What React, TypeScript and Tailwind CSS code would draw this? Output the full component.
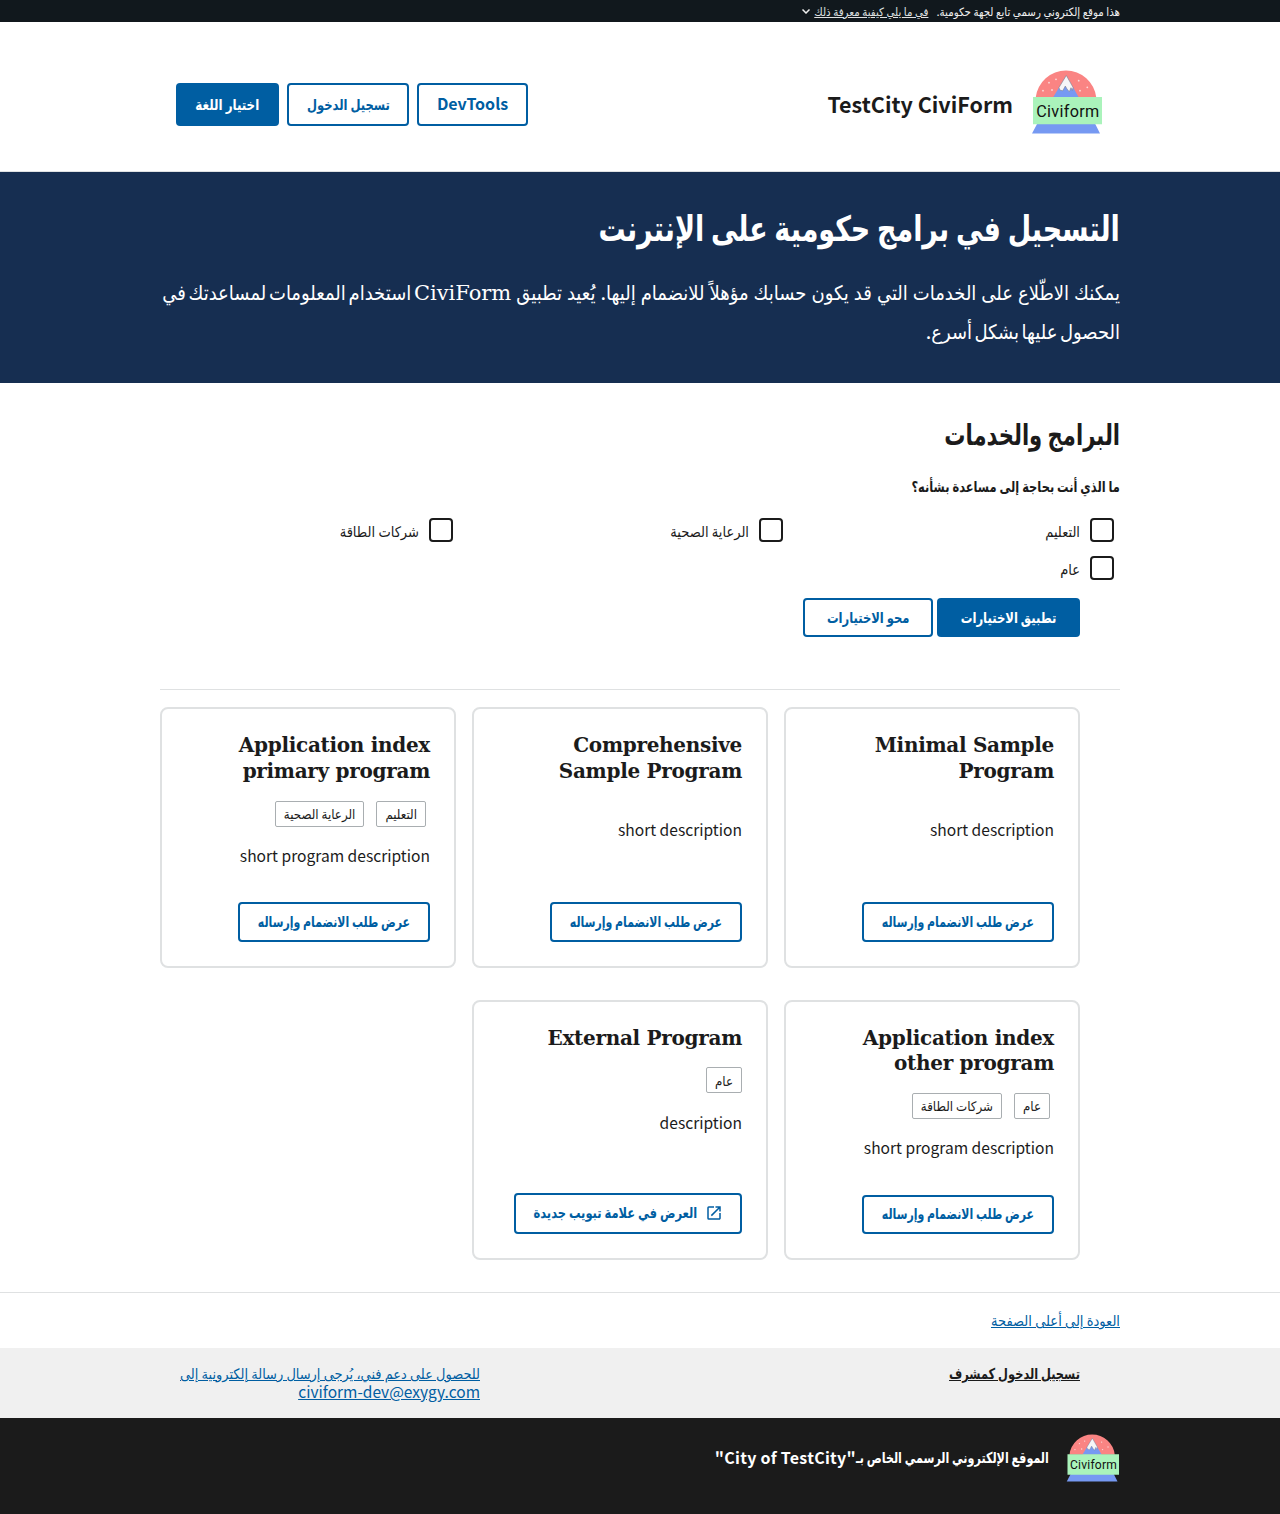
import React from "react";

const sans = "font-['Noto_Sans_CJK_JP','DejaVu_Sans_Condensed','DejaVu_Sans',sans-serif]";

function Logo({ className }: { className: string }) {
  return (
    <svg viewBox="0 0 71 64" className={`shrink-0 ${className}`} aria-label="Civiform">
      <path d="M4.700 27.500A30.500 30.500 0 0 1 65.300 27.500z" fill="#fa8483" />
      <path d="M22 27.500 35.300 5.500 47.800 27.500z" fill="#7699f2" />
      <path d="M35.300 5.500 28 17.500 28.800 20 31.700 20.800 34.300 16 36 19 38.300 21.700 40 17.700 41.300 20.500 42 17.300z" fill="#f6f6f8" stroke="#77777c" strokeWidth=".5" />
      <g fill="#fbdada">
        {[[18, 12.7], [25, 9.3], [12, 20.7], [21, 20], [47.7, 10.7], [56.3, 17.3], [49, 20.7]].map(([x, y]) => (
          <circle key={x} cx={x} cy={y} r=".9" />
        ))}
      </g>
      <path d="M1 63.500 6.300 53.500H64L69 63.500z" fill="#7699f2" />
      <path d="M2 27H71V54.300H2z" fill="#aaf3bb" />
      <text x="5.200" y="47.300" textLength="63" direction="ltr" textAnchor="start" fontFamily="Roboto" fontSize="16.200" fill="#111">Civiform</text>
    </svg>
  );
}

/* Bold Arabic runs are set slightly narrower than the family's natural width. */
function Narrow({ children, className }: { children: React.ReactNode; className: string }) {
  return <span className={`inline-block whitespace-nowrap ${className}`}>{children}</span>;
}

function Button({ children, className, solid }: { children: React.ReactNode; className: string; solid?: boolean }) {
  return (
    <button className={`flex items-center justify-center rounded-[4px] pb-[3px] text-[15px] leading-none font-bold whitespace-nowrap ${solid ? "bg-[#005ea2] text-white" : "border-2 border-[#005ea2] bg-white text-[#005ea2]"} ${className}`}>
      {children}
    </button>
  );
}

function Check({ label, className }: { label: string; className: string }) {
  return (
    <label className={`flex h-6 items-start gap-[10px] text-[14.5px] ${className}`}>
      <span className="h-6 w-6 shrink-0 rounded-[4px] border-2 border-[#1b1b1b]" />
      <span className="leading-[26px]">{label}</span>
    </label>
  );
}

function Card({ title, tags, desc, external, className }: { title: string[]; tags?: string[]; desc: string; external?: boolean; className: string }) {
  return (
    <article className={`flex w-[296px] flex-col items-start rounded-lg border-2 border-[#dfe1e2] p-6 ${className}`}>
      <h3 className="font-['DejaVu_Serif'] text-[20px] leading-[25.6px] font-bold tracking-[-0.3px] whitespace-nowrap">
        {title.map((t) => <span key={t} className="block">{t}</span>)}
      </h3>
      {tags ? (
        <div className={`mt-[16.2px] flex h-[26px] gap-3 ${tags.length > 1 ? "ps-1" : ""}`}>
          {tags.map((t) => (
            <span key={t} className="flex items-center rounded-[2px] border border-[#a9aeb1] px-2 text-[13.2px] leading-none whitespace-nowrap">{t}</span>
          ))}
        </div>
      ) : null}
      <p className={`text-[15.6px] leading-[26px] ${tags ? "mt-[15.2px]" : "mt-8"}`}>{desc}</p>
      {external ? (
        <Button className="mt-auto h-[41px] w-[228px]">
          <svg viewBox="0 0 24 24" className="mt-[3px] h-[18px] w-[18px] shrink-0" fill="currentColor">
            <path d="M19 19H5V5h7V3H5a2 2 0 0 0-2 2v14a2 2 0 0 0 2 2h14c1.100 0 2-.9 2-2v-7h-2v7zM14 3v2h3.590l-9.830 9.830 1.410 1.410L19 6.410V10h2V3h-7z" />
          </svg>
          <span className="ms-2 flex w-[164px] justify-center"><Narrow className="scale-x-[.85]">العرض في علامة تبويب جديدة</Narrow></span>
        </Button>
      ) : (
        <Button className="mt-auto h-[39.3px] w-48"><Narrow className="scale-x-[.81]">عرض طلب الانضمام وإرساله</Narrow></Button>
      )}
    </article>
  );
}

export default function App() {
  return (
    <div dir="rtl" className={`h-[1514px] w-[1280px] overflow-hidden bg-white text-[#1b1b1b] ${sans}`}>
      <div className="flex h-[22px] items-center bg-[#11181d] px-40 pt-px text-[11.4px] leading-none text-[#f0f0f0]">
        <span>هذا موقع إلكتروني رسمي تابع لجهة حكومية.</span>
        <span className="ms-2 text-[#dfe1e2] underline">في ما يلي كيفية معرفة ذلك</span>
        <svg viewBox="0 0 8 5" className="ms-1 h-[5px] w-2" fill="none" stroke="currentColor" strokeWidth="1.500"><path d="m.5.5 3.500 3.500 3.500-3.500" /></svg>
      </div>
      <header className="flex h-[150px] items-center border-b border-[#dfe1e2] px-40 pt-[24px]">
        <Logo className="ms-[18px] mb-[14px] h-16 w-[71px]" />
        <span className="ms-[18px] mb-[9px] text-[21.5px] font-bold">TestCity CiviForm</span>
        <div className="ms-auto me-4 mb-2 flex gap-2">
          <Button className="h-[43px] w-[111px] text-[16px]">DevTools</Button>
          <Button className="h-[43px] w-[122px]"><Narrow className="scale-x-[.855]">تسجيل الدخول</Narrow></Button>
          <Button solid className="h-[43px] w-[103px]"><Narrow className="scale-x-[.88]">اختيار اللغة</Narrow></Button>
        </div>
      </header>
      <section className="h-[211px] bg-[#162e51] px-40 pt-[27px] text-white">
        <h1 className="h-[54px] text-[35px] leading-[54px] font-bold"><Narrow className="origin-right scale-x-[.855]">التسجيل في برامج حكومية على الإنترنت</Narrow></h1>
        <p className="mt-[19px] text-[20px] leading-[39px] whitespace-nowrap">
          <span className="block h-[39px]">
            <span className="[word-spacing:.5px]">يمكنك الاطّلاع على الخدمات التي قد يكون حسابك مؤهلاً للانضمام إليها. يُعيد تطبيق </span>
            <span className="font-['DejaVu_Serif'] text-[21px] leading-none">CiviForm</span>
            <span className="[word-spacing:-1.8px]"> استخدام المعلومات لمساعدتك في</span>
          </span>
          <span className="block h-[39px] [word-spacing:-2px]">الحصول عليها بشكل أسرع.</span>
        </p>
      </section>
      <main className="h-[909px] px-40 pt-[29px]">
        <h2 className="h-[43px] text-[29px] leading-10 font-bold"><Narrow className="origin-right scale-x-[.81]">البرامج والخدمات</Narrow></h2>
        <p className="mt-[19px] mb-5 h-6 text-[15px] leading-6 font-bold"><Narrow className="origin-right scale-x-[.848]">ما الذي أنت بحاجة إلى مساعدة بشأنه؟</Narrow></p>
        <div className="flex ps-[6px]">
          <Check className="w-[331px]" label="التعليم" />
          <Check className="w-[330px]" label="الرعاية الصحية" />
          <Check className="" label="شركات الطاقة" />
        </div>
        <div className="mt-[14px] ps-[6px]"><Check className="" label="عام" /></div>
        <div className="mt-[18px] flex gap-1 ps-10">
          <Button solid className="h-[39px] w-[143px]"><Narrow className="scale-x-[.86]">تطبيق الاختيارات</Narrow></Button>
          <Button className="h-[39px] w-[130px]"><Narrow className="scale-x-[.855]">محو الاختيارات</Narrow></Button>
        </div>
        <div className="mt-[52px] border-t border-[#dfe1e2]" />
        <div className="mt-[17.2px] flex flex-wrap gap-x-4 gap-y-8 ps-10">
          <Card className="h-[260.5px]" title={["Minimal Sample", "Program"]} desc="short description" />
          <Card className="h-[260.5px]" title={["Comprehensive", "Sample Program"]} desc="short description" />
          <Card className="h-[260.5px]" title={["Application index", "primary program"]} tags={["التعليم", "الرعاية الصحية"]} desc="short program description" />
          <Card className="h-[260.2px]" title={["Application index", "other program"]} tags={["عام", "شركات الطاقة"]} desc="short program description" />
          <Card className="h-[260.2px]" title={["External Program"]} tags={["عام"]} desc="description" external />
        </div>
      </main>
      <footer>
        <div className="flex h-14 items-center border-t border-[#dfe1e2] px-40 pb-px text-[14.5px] text-[#005ea2]"><a className="underline">العودة إلى أعلى الصفحة</a></div>
        <div className="flex h-[70px] justify-between bg-[#f0f0f0] ps-[200px] pe-[180px] pt-4 text-[14.4px] leading-[18px]">
          <a className="text-[15px] font-bold"><Narrow className="origin-right scale-x-[.845] underline">تسجيل الدخول كمشرف</Narrow></a>
          <a className="w-[300px] whitespace-nowrap text-[#005ea2] underline">
            <span className="block h-[18px] underline">للحصول على دعم فني، يُرجى إرسال رسالة إلكترونية إلى</span>
            <span className="block h-[18px] text-[15.5px] underline">civiform-dev@exygy.com</span>
          </a>
        </div>
        <div className="flex h-24 items-start bg-[#1b1b1b] px-40 pt-4 text-white">
          <Logo className="ms-px h-12 w-[53px]" />
          <span className="ms-[17px] flex text-[15px] leading-[48px] font-bold whitespace-nowrap">
            <span className="mt-[-1px] w-[193px]"><Narrow className="origin-right scale-x-[.825]">الموقع الإلكتروني الرسمي الخاص بـ</Narrow></span>
            <bdi dir="ltr" className="mt-[-1px] text-[16px] tracking-[.27px]">"City of TestCity"</bdi>
          </span>
        </div>
      </footer>
    </div>
  );
}
